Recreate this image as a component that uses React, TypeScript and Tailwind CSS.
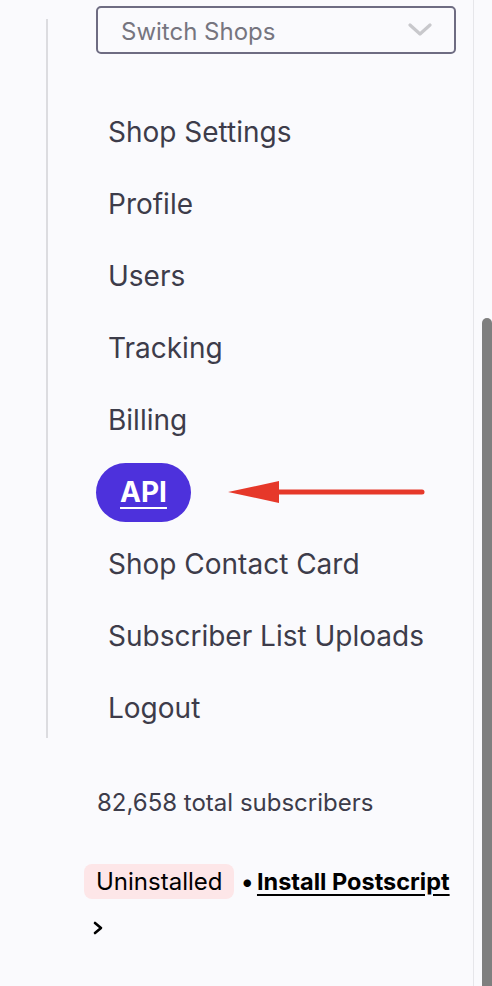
import React from 'react';

const items = [
  'Shop Settings',
  'Profile',
  'Users',
  'Tracking',
  'Billing',
  'API',
  'Shop Contact Card',
  'Subscriber List Uploads',
  'Logout',
];

export default function App() {
  return (
    <div className="relative h-[986px] w-[492px] overflow-hidden bg-[#fafafd] font-['Inter',sans-serif] text-[#3d3c4a]">
      <div className="flex h-full">
        <div className="w-[474px] border-r border-[#e6e6ea]">
          <div className="flex">
            <div className="ml-[46px] mt-[19px] h-[719px] w-[2px] bg-[#dcdce0]" />
            <div className="ml-[48px] flex flex-col">
              <div className="mt-[6px] flex h-[48px] w-[360px] items-center justify-between rounded-[5px] border-2 border-[#6e6c82] pl-[23px] pr-[22px]">
                <span className="mt-[3px] text-[24px] leading-[30px] text-[#76757f]">Switch Shops</span>
                <svg width="24" height="14" viewBox="0 0 24 14" fill="none">
                  <path d="M2 2l10 9 10-9" stroke="#c8c8cc" strokeWidth="3.2" strokeLinecap="round" strokeLinejoin="round" />
                </svg>
              </div>
              <div className="mt-[42px] flex flex-col">
                {items.map((item) =>
                  item === 'API' ? (
                    <div key={item} className="flex h-[72px] items-center">
                      <span className="flex h-[59px] w-[95px] items-center justify-center rounded-full bg-[#4d31dc] text-[28px] font-bold text-white underline decoration-2 underline-offset-[5px]">
                        API
                      </span>
                      <svg className="ml-[37px]" width="198" height="24" viewBox="0 0 198 24">
                        <polygon points="0,12 51,1 51,23" fill="#e6382a" />
                        <line x1="45" y1="12" x2="194" y2="12" stroke="#e6382a" strokeWidth="5" strokeLinecap="round" />
                      </svg>
                    </div>
                  ) : (
                    <div key={item} className="flex h-[72px] items-center pl-[12px] text-[28px]">
                      {item}
                    </div>
                  )
                )}
              </div>
            </div>
          </div>
          <div className="ml-[97px] mt-[43px] text-[24px] leading-[32px]">82,658 total subscribers</div>
          <div className="ml-[84px] mt-[45px] flex items-center text-[24px] leading-[29px] text-black">
            <span className="rounded-[8px] bg-[#fde6e8] px-[12px] py-[3px]">Uninstalled</span>
            <span className="ml-[6px]">•</span>
            <span className="ml-[3px] text-[23.5px] font-bold underline underline-offset-[4px]">Install Postscript</span>
          </div>
          <div className="ml-[92px] mt-[21px]">
            <svg width="12" height="16" viewBox="0 0 12 16" fill="none">
              <path d="M3 3l6 5-6 5" stroke="#000" strokeWidth="2.6" strokeLinecap="round" strokeLinejoin="round" />
            </svg>
          </div>
        </div>
        <div className="flex-1 pl-[8px] pt-[318px]">
          <div className="h-full w-[10px] rounded-t-[6px] bg-[#7f7f7f]" />
        </div>
      </div>
    </div>
  );
}
